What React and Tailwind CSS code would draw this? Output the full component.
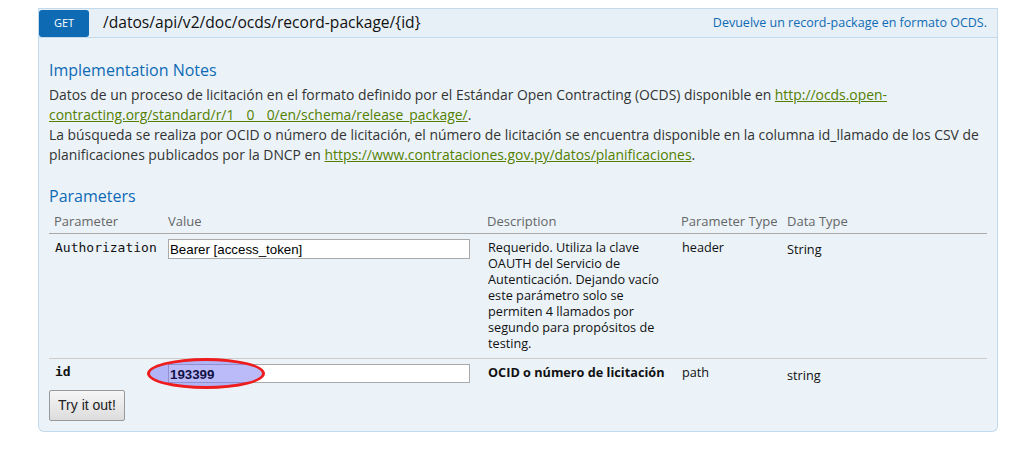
import React from "react";

const sans = { fontFamily: '"Open Sans", "Noto Sans", sans-serif' };

export default function App() {
  return (
    <div className="w-full h-[456px] bg-white" style={sans}>
      <div className="w-[960px] ml-[38px] pt-[8px]">
        {/* heading */}
        <div className="flex items-center h-[30px] bg-[#e7f0f7] border border-[#c3d9ec]">
          <div className="w-[50px] h-[27px] rounded-[3px] bg-[#0f6ab4] text-white text-[11px] flex items-center justify-center">
            GET
          </div>
          <div className="ml-[14px] text-[15.6px] text-[#111]">/datos/api/v2/doc/ocds/record-package/&#123;id&#125;</div>
          <div className="ml-auto mr-[10px] text-[12.5px] text-[#0f6ab4]">Devuelve un record-package en formato OCDS.</div>
        </div>
        {/* content */}
        <div className="bg-[#ebf3f9] border border-t-0 border-[#c3d9ec] rounded-b-[6px] px-[10px] pt-[21px] pb-[10px]">
          <div className="text-[16px] leading-[22px] text-[#0f6ab4]">Implementation Notes</div>
          <div className="text-[13.9px] leading-[20px] text-[#333] mt-[4px]">
            Datos de un proceso de licitación en el formato definido por el Estándar Open Contracting (OCDS) disponible en{" "}
            <a className="text-[#547f00] underline">http://ocds.open-contracting.org/standard/r/1__0__0/en/schema/release_package/</a>.
            <br />
            La búsqueda se realiza por OCID o número de licitación, el número de licitación se encuentra disponible en la columna id_llamado de los CSV de planificaciones publicados por la DNCP en{" "}
            <a className="text-[#547f00] underline">https://www.contrataciones.gov.py/datos/planificaciones</a>.
          </div>
          <div className="text-[16px] leading-[22px] text-[#0f6ab4] mt-[20px]">Parameters</div>
          <div className="mt-[2px] text-[13px]">
            <div className="grid grid-cols-[114px_319px_194px_106px_1fr] text-[#666] h-[25px] pt-[1px] items-center border-b border-[#aaa]">
              <div className="pl-[5px]">Parameter</div>
              <div className="pl-[5px]">Value</div>
              <div className="pl-[5px]">Description</div>
              <div className="pl-[5px]">Parameter Type</div>
              <div className="pl-[5px]">Data Type</div>
            </div>
            <div className="grid grid-cols-[114px_319px_194px_106px_1fr] border-b border-[#ccc] pt-[5px] pb-[7px] text-[#111]">
              <div className="pl-[6px] pt-[1px] text-[13px] leading-[16px]" style={{ fontFamily: '"DejaVu Sans Mono", monospace' }}>Authorization</div>
              <div className="pl-[5px]">
                <input
                  readOnly
                  value="Bearer [access_token]"
                  className="w-[302px] h-[20px] bg-white border border-[#aaa] px-[1px] text-[13.3px] text-black outline-none"
                  style={{ fontFamily: '"Liberation Sans", Arial, sans-serif' }}
                />
              </div>
              <div className="pl-[6px] pr-[8px] text-[12.7px] leading-[16px]">
                Requerido. Utiliza la clave OAUTH del Servicio de Autenticación. Dejando vacío este parámetro solo se permiten 4 llamados por segundo para propósitos de testing.
              </div>
              <div className="pl-[6px] text-[12.7px] leading-[16px]">header</div>
              <div className="pl-[5px] text-[12.7px] leading-[16px] pt-[2px]">String</div>
            </div>
            <div className="grid grid-cols-[114px_319px_194px_106px_1fr] pt-[5px] pb-[5px] text-[#111]">
              <div className="pl-[6px] text-[13px] leading-[16px] font-bold" style={{ fontFamily: '"DejaVu Sans Mono", monospace' }}>id</div>
              <div className="pl-[5px] relative">
                <input
                  readOnly
                  value=""
                  className="w-[302px] h-[19px] bg-white border border-[#aaa] outline-none"
                />
                <div className="absolute left-[-16px] top-[-6px] w-[118px] h-[31px] rounded-[50%] border-[3px] border-[#ee1c1c] bg-[rgba(120,120,245,0.5)]" />
                <div
                  className="absolute left-[7px] top-[1px] text-[13.3px] font-bold text-[#111144]"
                  style={{ fontFamily: '"Liberation Sans", Arial, sans-serif' }}
                >
                  193399
                </div>
              </div>
              <div className="pl-[6px] text-[12.7px] leading-[16px] font-bold whitespace-nowrap">OCID o número de licitación</div>
              <div className="pl-[6px] text-[12.7px] leading-[16px]">path</div>
              <div className="pl-[5px] text-[12.7px] leading-[16px] pt-[3px]">string</div>
            </div>
          </div>
          <button
            className="mt-[1px] w-[76px] h-[31px] border border-[#999] rounded-[2px] bg-gradient-to-b from-[#f6f6f6] to-[#dcdcdc] text-[14px] text-[#222]"
            style={{ fontFamily: '"Liberation Sans", Arial, sans-serif' }}
          >
            Try it out!
          </button>
        </div>
      </div>
    </div>
  );
}
